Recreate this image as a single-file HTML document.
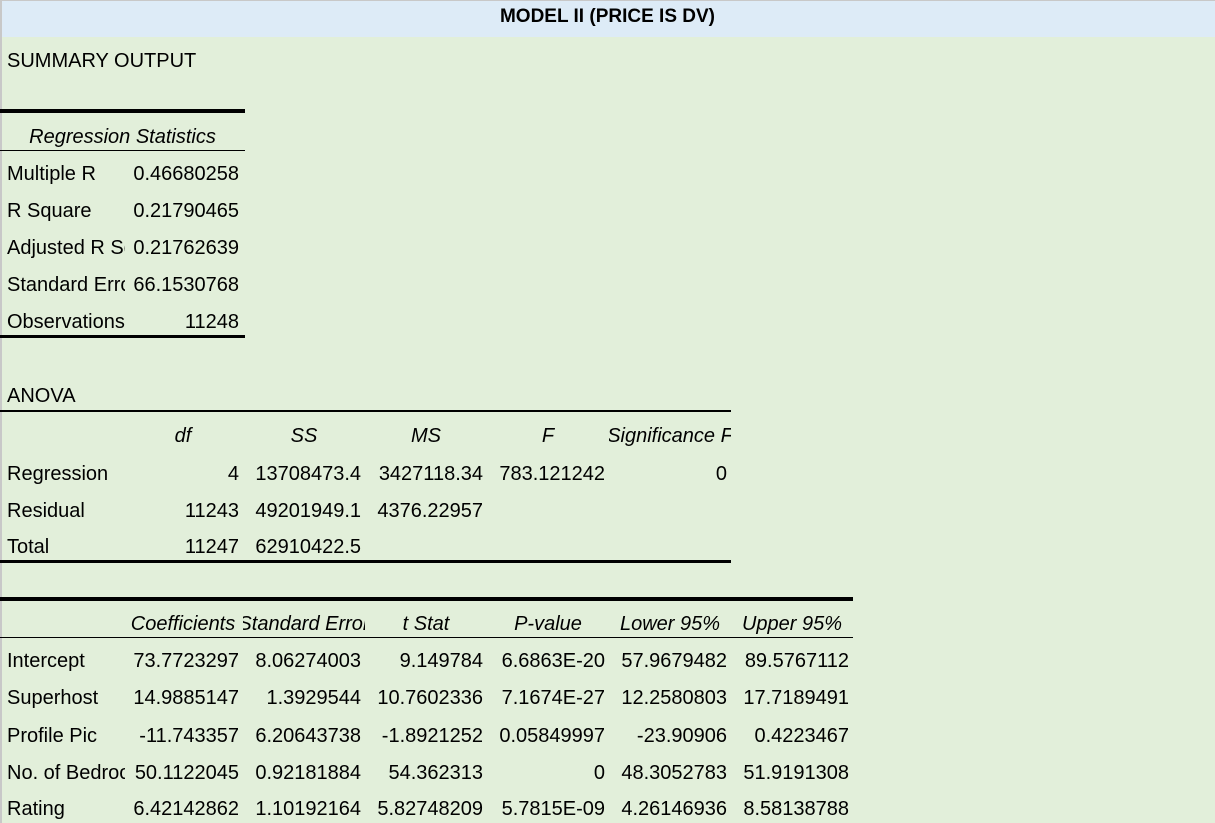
<!DOCTYPE html>
<html><head><meta charset="utf-8"><style>
body{margin:0;width:1215px;height:823px;overflow:hidden;background:#e2efda;position:relative;font-family:"Liberation Sans",sans-serif;font-size:20px;color:#000}
.hd{position:absolute;left:0;top:0;width:1215px;height:37px;background:#ddebf7;border-top:1px solid #c8c8c8;box-sizing:border-box}
.lb{position:absolute;left:0;top:0;width:2px;height:823px;background:#c8c8c8}
.c{position:absolute;height:24px;line-height:24px;overflow:hidden;white-space:nowrap;display:flex;box-sizing:border-box;padding:0 4px;margin-top:-3px}
.l{justify-content:flex-start}.r{justify-content:flex-end}.m{justify-content:center;font-style:italic}
.ln{position:absolute;background:#000}
</style></head><body>
<div class="hd"></div><div class="lb"></div>
<div class="c m" style="left:0;width:1215px;top:8px;font-style:normal;font-weight:bold;font-size:19px">MODEL II (PRICE IS DV)</div>
<div class="c l" style="left:3px;width:300px;top:52px">SUMMARY OUTPUT</div>
<div class="ln" style="left:0;top:109px;width:245px;height:4px"></div>
<div class="c m" style="left:0;width:245px;top:128px;padding:0">Regression Statistics</div>
<div class="ln" style="left:0;top:150px;width:245px;height:1px"></div>
<div class="c l" style="left:3px;width:122px;top:165px">Multiple R</div><div class="c r" style="left:123px;width:120px;top:165px">0.46680258</div>
<div class="c l" style="left:3px;width:122px;top:202px">R Square</div><div class="c r" style="left:123px;width:120px;top:202px">0.21790465</div>
<div class="c l" style="left:3px;width:122px;top:239px">Adjusted R Square</div><div class="c r" style="left:123px;width:120px;top:239px">0.21762639</div>
<div class="c l" style="left:3px;width:122px;top:276px">Standard Error</div><div class="c r" style="left:123px;width:120px;top:276px">66.1530768</div>
<div class="c l" style="left:3px;width:122px;top:313px">Observations</div><div class="c r" style="left:123px;width:120px;top:313px">11248</div>
<div class="ln" style="left:0;top:335px;width:245px;height:3px"></div>
<div class="c l" style="left:3px;width:200px;top:387px">ANOVA</div>
<div class="ln" style="left:0;top:410px;width:731px;height:2px"></div>
<div class="c m" style="left:123px;width:120px;top:427px">df</div>
<div class="c m" style="left:243px;width:122px;top:427px">SS</div>
<div class="c m" style="left:365px;width:122px;top:427px">MS</div>
<div class="c m" style="left:487px;width:122px;top:427px">F</div>
<div class="c m" style="left:609px;width:122px;top:427px;padding:0">Significance F</div>
<div class="c l" style="left:3px;width:122px;top:465px">Regression</div><div class="c r" style="left:123px;width:120px;top:465px">4</div><div class="c r" style="left:243px;width:122px;top:465px">13708473.4</div><div class="c r" style="left:365px;width:122px;top:465px">3427118.34</div><div class="c r" style="left:487px;width:122px;top:465px">783.121242</div><div class="c r" style="left:609px;width:122px;top:465px">0</div>
<div class="c l" style="left:3px;width:122px;top:502px">Residual</div><div class="c r" style="left:123px;width:120px;top:502px">11243</div><div class="c r" style="left:243px;width:122px;top:502px">49201949.1</div><div class="c r" style="left:365px;width:122px;top:502px">4376.22957</div>
<div class="c l" style="left:3px;width:122px;top:538px">Total</div><div class="c r" style="left:123px;width:120px;top:538px">11247</div><div class="c r" style="left:243px;width:122px;top:538px">62910422.5</div>
<div class="ln" style="left:0;top:560px;width:731px;height:3px"></div>
<div class="ln" style="left:0;top:597px;width:853px;height:4px"></div>
<div class="c m" style="left:123px;width:120px;top:615px;padding:0">Coefficients</div>
<div class="c m" style="left:243px;width:122px;top:615px;padding:0">Standard Error</div>
<div class="c m" style="left:365px;width:122px;top:615px">t Stat</div>
<div class="c m" style="left:487px;width:122px;top:615px">P-value</div>
<div class="c m" style="left:609px;width:122px;top:615px">Lower 95%</div>
<div class="c m" style="left:731px;width:122px;top:615px">Upper 95%</div>
<div class="ln" style="left:0;top:637px;width:853px;height:1px"></div>
<div class="c l" style="left:3px;width:122px;top:652px">Intercept</div><div class="c r" style="left:123px;width:120px;top:652px">73.7723297</div><div class="c r" style="left:243px;width:122px;top:652px">8.06274003</div><div class="c r" style="left:365px;width:122px;top:652px">9.149784</div><div class="c r" style="left:487px;width:122px;top:652px">6.6863E-20</div><div class="c r" style="left:609px;width:122px;top:652px">57.9679482</div><div class="c r" style="left:731px;width:122px;top:652px">89.5767112</div>
<div class="c l" style="left:3px;width:122px;top:689px">Superhost</div><div class="c r" style="left:123px;width:120px;top:689px">14.9885147</div><div class="c r" style="left:243px;width:122px;top:689px">1.3929544</div><div class="c r" style="left:365px;width:122px;top:689px">10.7602336</div><div class="c r" style="left:487px;width:122px;top:689px">7.1674E-27</div><div class="c r" style="left:609px;width:122px;top:689px">12.2580803</div><div class="c r" style="left:731px;width:122px;top:689px">17.7189491</div>
<div class="c l" style="left:3px;width:122px;top:727px">Profile Pic</div><div class="c r" style="left:123px;width:120px;top:727px">-11.743357</div><div class="c r" style="left:243px;width:122px;top:727px">6.20643738</div><div class="c r" style="left:365px;width:122px;top:727px">-1.8921252</div><div class="c r" style="left:487px;width:122px;top:727px">0.05849997</div><div class="c r" style="left:609px;width:122px;top:727px">-23.90906</div><div class="c r" style="left:731px;width:122px;top:727px">0.4223467</div>
<div class="c l" style="left:3px;width:122px;top:764px">No. of Bedrooms</div><div class="c r" style="left:123px;width:120px;top:764px">50.1122045</div><div class="c r" style="left:243px;width:122px;top:764px">0.92181884</div><div class="c r" style="left:365px;width:122px;top:764px">54.362313</div><div class="c r" style="left:487px;width:122px;top:764px">0</div><div class="c r" style="left:609px;width:122px;top:764px">48.3052783</div><div class="c r" style="left:731px;width:122px;top:764px">51.9191308</div>
<div class="c l" style="left:3px;width:122px;top:800px">Rating</div><div class="c r" style="left:123px;width:120px;top:800px">6.42142862</div><div class="c r" style="left:243px;width:122px;top:800px">1.10192164</div><div class="c r" style="left:365px;width:122px;top:800px">5.82748209</div><div class="c r" style="left:487px;width:122px;top:800px">5.7815E-09</div><div class="c r" style="left:609px;width:122px;top:800px">4.26146936</div><div class="c r" style="left:731px;width:122px;top:800px">8.58138788</div>
</body></html>
